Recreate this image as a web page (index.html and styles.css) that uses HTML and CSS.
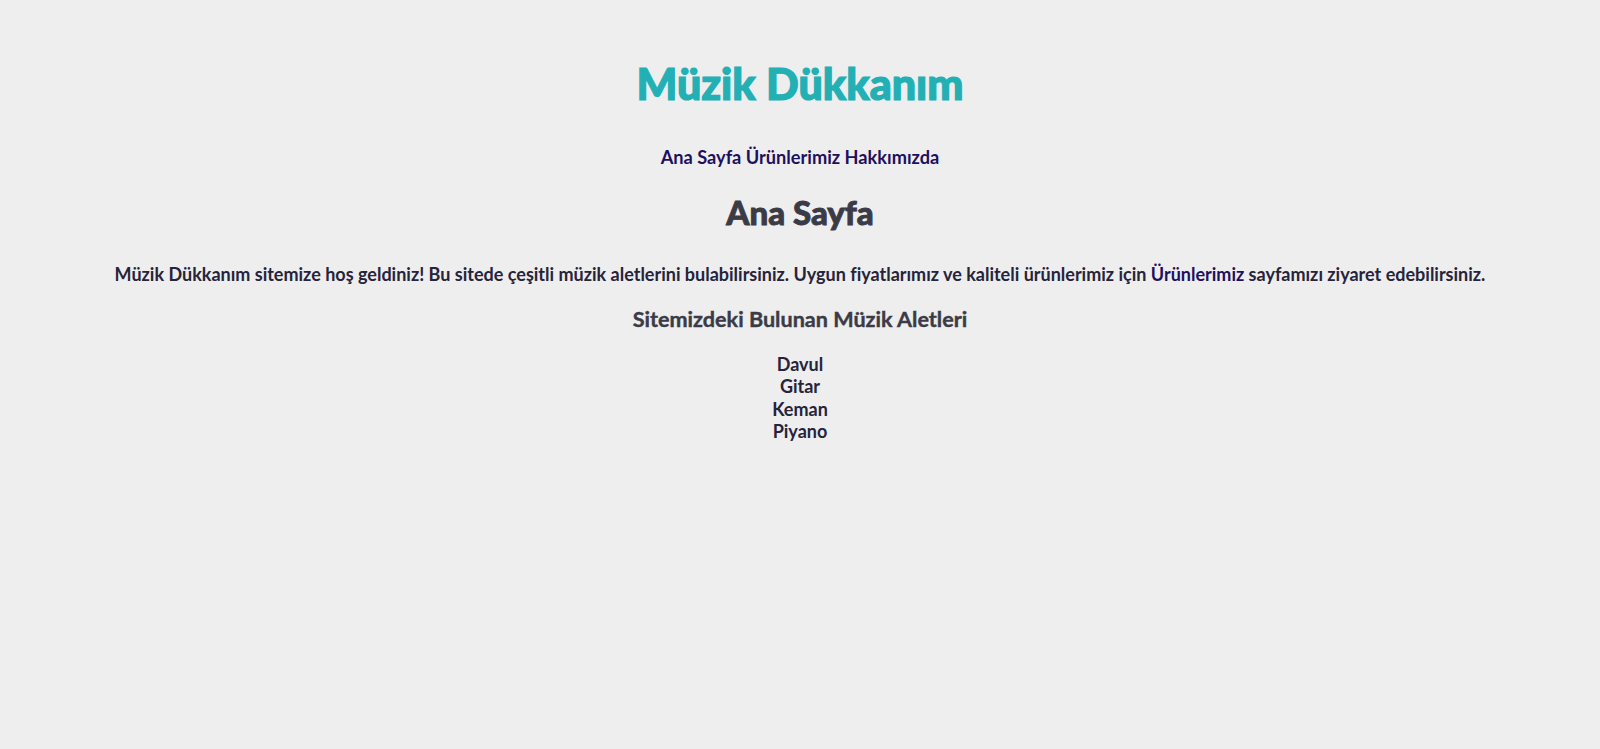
FILE: index.html
```html
<!DOCTYPE html>
<html lang="tr">
<head>
<meta charset="utf-8">
<title>Müzik Dükkanım</title>
<link rel="stylesheet" href="styles.css">
</head>
<body>
<header class="site-header">
  <h1 class="site-title">Müzik Dükkanım</h1>
  <nav class="site-nav">
    <a href="#" class="nav-link">Ana Sayfa</a>
    <a href="#" class="nav-link">Ürünlerimiz</a>
    <a href="#" class="nav-link">Hakkımızda</a>
  </nav>
</header>
<main class="content">
  <h2 class="page-title">Ana Sayfa</h2>
  <p class="intro">Müzik Dükkanım sitemize hoş geldiniz! Bu sitede çeşitli müzik aletlerini bulabilirsiniz. Uygun fiyatlarımız ve kaliteli ürünlerimiz için <a href="#" class="inline-link">Ürünlerimiz</a> sayfamızı ziyaret edebilirsiniz.</p>
  <h3 class="section-title">Sitemizdeki Bulunan Müzik Aletleri</h3>
  <ul class="instrument-list">
    <li>Davul</li>
    <li>Gitar</li>
    <li>Keman</li>
    <li>Piyano</li>
  </ul>
</main>
</body>
</html>
```
FILE: styles.css
```css
html, body {
  margin: 0;
  padding: 0;
}
body {
  background: #eeeeee;
  font-family: Lato, "Noto Sans", sans-serif;
  font-weight: 700;
  color: #26233a;
  text-align: center;
  font-size: 18px;
}
.site-header {
  padding-top: 50px;
}
.site-title {
  margin: 0;
  font-size: 43px;
  line-height: 68px;
  color: #22b0b5;
  font-weight: 900;
  -webkit-text-stroke: 1.2px #22b0b5;
}
.site-nav {
  margin-top: 28px;
  font-size: 18.2px;
  line-height: 22px;
}
.nav-link, .inline-link {
  color: #1e1060;
  text-decoration: none;
}
.content {
  padding-top: 24px;
}
.page-title {
  margin: 0;
  font-size: 33px;
  line-height: 40px;
  color: #3b3b47;
  font-weight: 900;
  -webkit-text-stroke: 0.9px #3b3b47;
}
.intro {
  margin: 31px 0 0;
  line-height: 22px;
}
.section-title {
  margin: 20px 0 0;
  font-size: 21.6px;
  line-height: 28px;
  color: #3b3b47;
  -webkit-text-stroke: 0.4px #3b3b47;
}
.instrument-list {
  list-style: none;
  margin: 20px 0 0;
  padding: 0;
  line-height: 22.4px;
}
```
